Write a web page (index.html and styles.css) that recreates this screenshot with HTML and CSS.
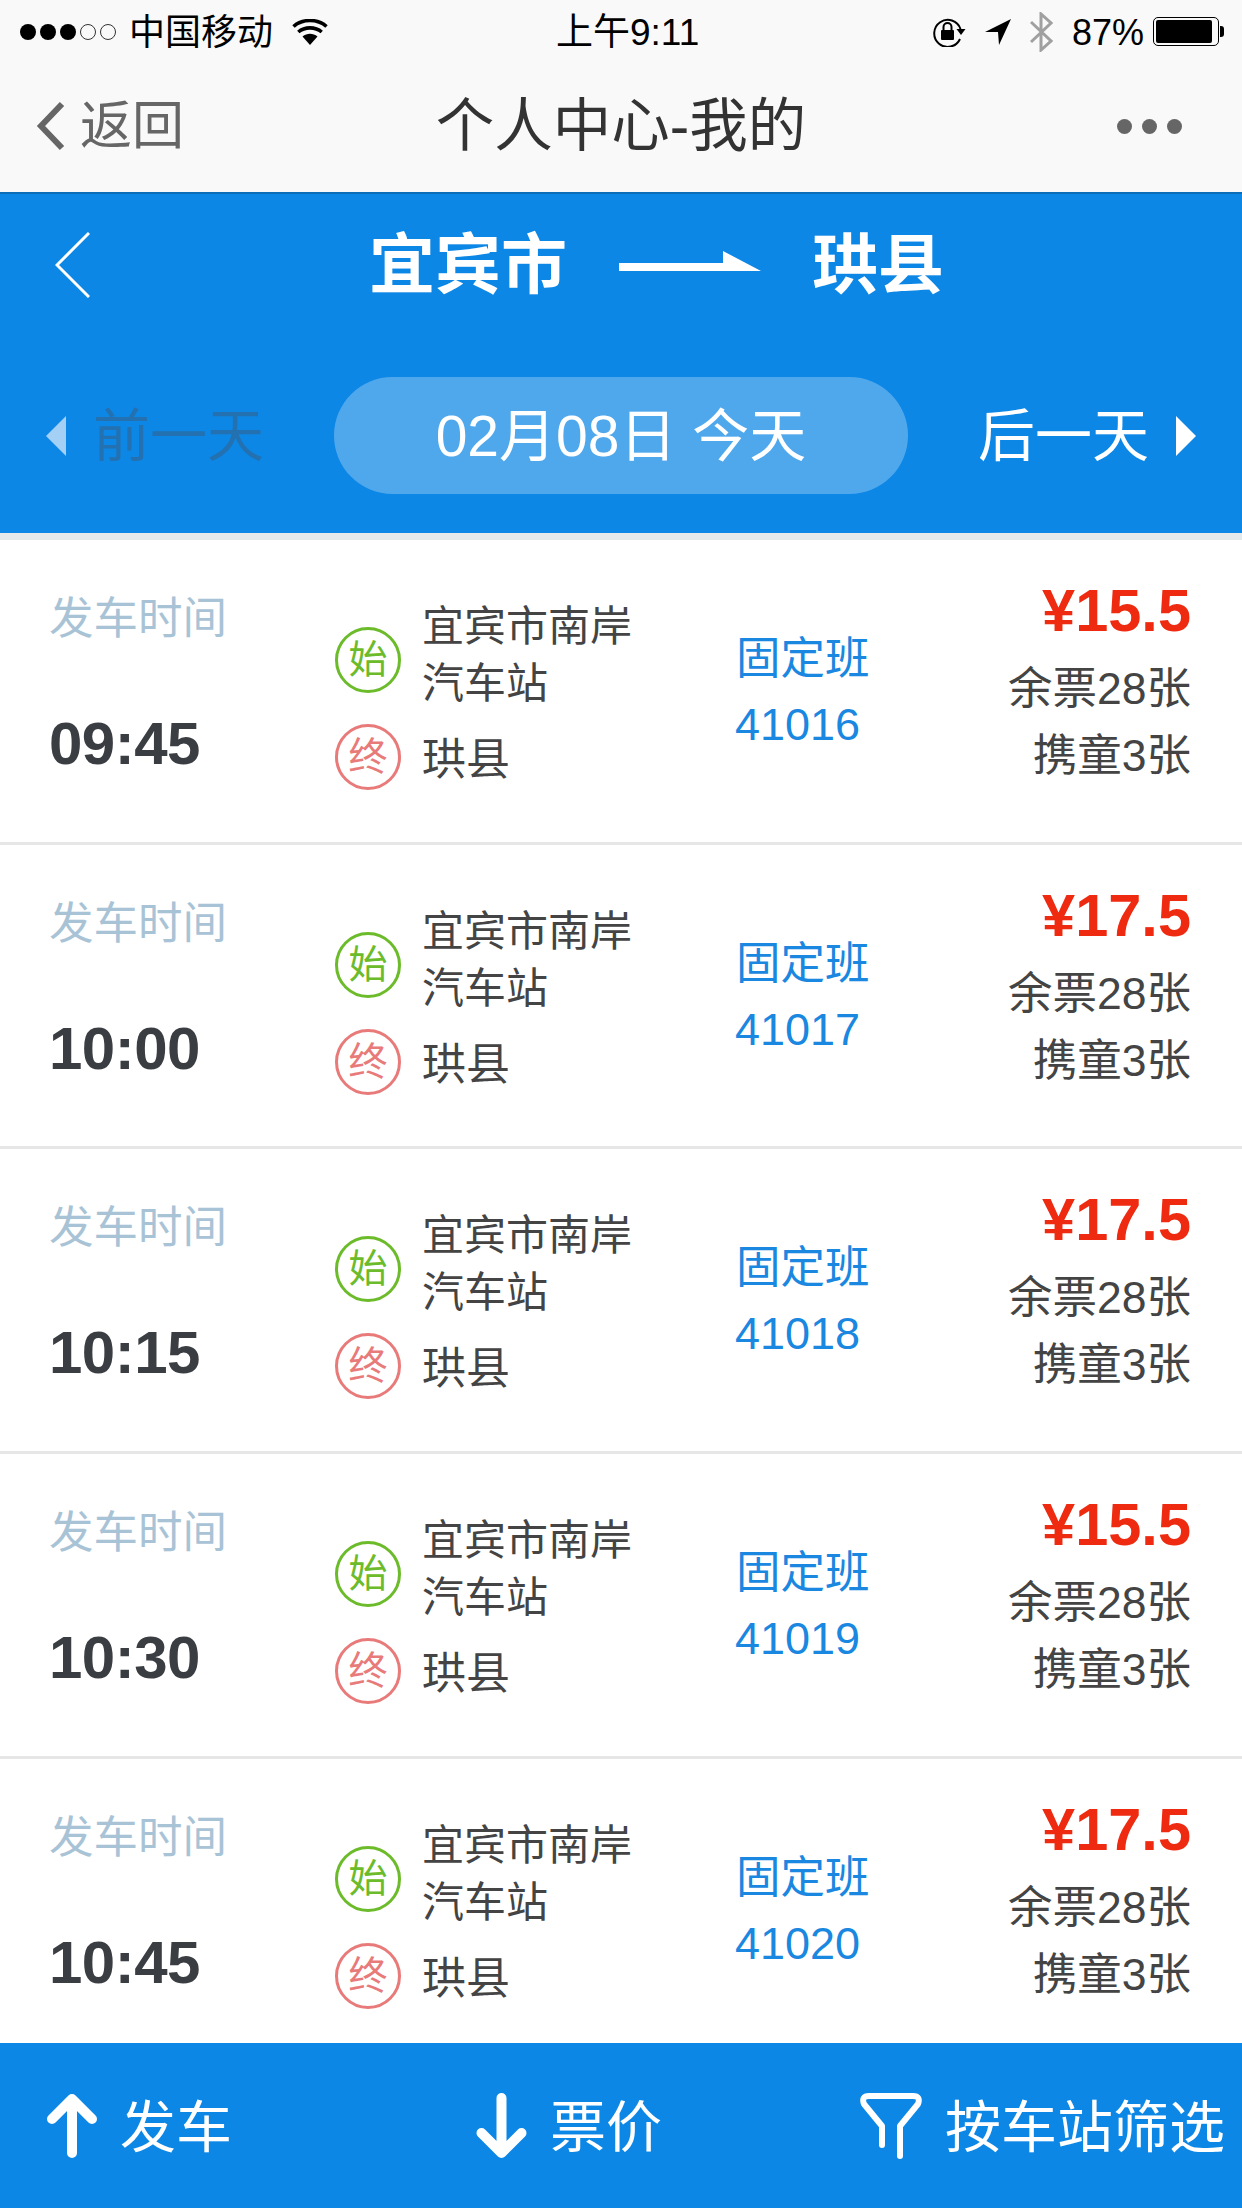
FILE: index.html
```html
<!DOCTYPE html>
<html lang="zh-CN">
<head>
    <meta charset="UTF-8">
    <meta name="viewport" content="width=device-width, initial-scale=1.0">
    <title>个人中心-我的</title>
    <link rel="stylesheet" href="styles.css">
</head>
<body>

<!-- Status bar -->
<div class="status-bar">
    <div class="status-left">
        <span class="signal"><i></i><i></i><i></i><i class="off"></i><i class="off"></i></span>
        <span class="carrier">中国移动</span>
        <svg class="wifi" width="36" height="26" viewBox="0 0 36 26">
            <path d="M18 26 L10.500 17.500 C15 13.800 21 13.800 25.500 17.500 Z" fill="#000"/>
            <path d="M6.300 13 C12.800 7.500 23.200 7.500 29.700 13" fill="none" stroke="#000" stroke-width="3.600"/>
            <path d="M1.500 7.500 C10.500 -0.500 25.500 -0.500 34.500 7.500" fill="none" stroke="#000" stroke-width="3.600"/>
        </svg>
    </div>
    <div class="status-time">上午9:11</div>
    <div class="status-right">
        <svg class="lock" width="34" height="30" viewBox="0 0 34 30">
            <path d="M28 22 A13.500 13.500 0 1 1 28.500 12" fill="none" stroke="#000" stroke-width="2"/>
            <path d="M24.500 12 L33.500 12 L29 18 Z" fill="#000"/>
            <rect x="9" y="13" width="13" height="10" rx="1" fill="#000"/>
            <path d="M11.500 13 V10 A4 4 0 0 1 19.500 10 V13" fill="none" stroke="#000" stroke-width="2"/>
        </svg>
        <svg class="location" width="26" height="26" viewBox="0 0 26 26">
            <path d="M26 0 L0 13 L13 13 L14 26 Z" fill="#000"/>
        </svg>
        <svg class="bluetooth" width="24" height="40" viewBox="0 0 24 40">
            <path d="M2 10 L22 29 L12 38 V2 L22 11 L2 30" fill="none" stroke="#a0a0a0" stroke-width="3"/>
        </svg>
        <span class="battery-text">87%</span>
        <span class="battery"><i></i></span>
    </div>
</div>

<!-- Nav bar -->
<div class="nav-bar">
    <div class="nav-back">
        <svg width="29" height="50" viewBox="0 0 29 50">
            <path d="M26 3 L5 25 L26 47" fill="none" stroke="#666" stroke-width="6"/>
        </svg>
        <span>返回</span>
    </div>
    <div class="nav-title">个人中心-我的</div>
    <div class="nav-more"><i></i><i></i><i></i></div>
</div>

<!-- Route header -->
<div class="route-header">
    <div class="route-line">
        <svg class="route-back" width="35" height="66" viewBox="0 0 35 66">
            <path d="M34 1 L2 33 L34 65" fill="none" stroke="#fff" stroke-width="3"/>
        </svg>
        <span class="route-from">宜宾市</span>
        <svg class="route-arrow" width="142" height="20" viewBox="0 0 142 20">
            <path d="M0 12 H104 V0 L142 20 H0 Z" fill="#fff"/>
        </svg>
        <span class="route-to">珙县</span>
    </div>
    <div class="date-line">
        <span class="tri-left"></span>
        <span class="day-prev">前一天</span>
        <div class="date-pill">02月08日 今天</div>
        <span class="day-next">后一天</span>
        <span class="tri-right"></span>
    </div>
</div>

<!-- Schedule list -->
<div class="list">
    <div class="row">
        <div class="col-time">
            <div class="time-label">发车时间</div>
            <div class="time-value">09:45</div>
        </div>
        <div class="col-stops">
            <div class="stop stop-start">
                <span class="badge badge-start">始</span>
                <span class="stop-name">宜宾市南岸<br>汽车站</span>
            </div>
            <div class="stop stop-end">
                <span class="badge badge-end">终</span>
                <span class="stop-name">珙县</span>
            </div>
        </div>
        <div class="col-type">固定班<br><span class="type-no">41016</span></div>
        <div class="col-price">
            <div class="price">¥15.5</div>
            <div class="tickets">余票28张<br>携童3张</div>
        </div>
    </div>
    <div class="row">
        <div class="col-time">
            <div class="time-label">发车时间</div>
            <div class="time-value">10:00</div>
        </div>
        <div class="col-stops">
            <div class="stop stop-start">
                <span class="badge badge-start">始</span>
                <span class="stop-name">宜宾市南岸<br>汽车站</span>
            </div>
            <div class="stop stop-end">
                <span class="badge badge-end">终</span>
                <span class="stop-name">珙县</span>
            </div>
        </div>
        <div class="col-type">固定班<br><span class="type-no">41017</span></div>
        <div class="col-price">
            <div class="price">¥17.5</div>
            <div class="tickets">余票28张<br>携童3张</div>
        </div>
    </div>
    <div class="row">
        <div class="col-time">
            <div class="time-label">发车时间</div>
            <div class="time-value">10:15</div>
        </div>
        <div class="col-stops">
            <div class="stop stop-start">
                <span class="badge badge-start">始</span>
                <span class="stop-name">宜宾市南岸<br>汽车站</span>
            </div>
            <div class="stop stop-end">
                <span class="badge badge-end">终</span>
                <span class="stop-name">珙县</span>
            </div>
        </div>
        <div class="col-type">固定班<br><span class="type-no">41018</span></div>
        <div class="col-price">
            <div class="price">¥17.5</div>
            <div class="tickets">余票28张<br>携童3张</div>
        </div>
    </div>
    <div class="row">
        <div class="col-time">
            <div class="time-label">发车时间</div>
            <div class="time-value">10:30</div>
        </div>
        <div class="col-stops">
            <div class="stop stop-start">
                <span class="badge badge-start">始</span>
                <span class="stop-name">宜宾市南岸<br>汽车站</span>
            </div>
            <div class="stop stop-end">
                <span class="badge badge-end">终</span>
                <span class="stop-name">珙县</span>
            </div>
        </div>
        <div class="col-type">固定班<br><span class="type-no">41019</span></div>
        <div class="col-price">
            <div class="price">¥15.5</div>
            <div class="tickets">余票28张<br>携童3张</div>
        </div>
    </div>
    <div class="row">
        <div class="col-time">
            <div class="time-label">发车时间</div>
            <div class="time-value">10:45</div>
        </div>
        <div class="col-stops">
            <div class="stop stop-start">
                <span class="badge badge-start">始</span>
                <span class="stop-name">宜宾市南岸<br>汽车站</span>
            </div>
            <div class="stop stop-end">
                <span class="badge badge-end">终</span>
                <span class="stop-name">珙县</span>
            </div>
        </div>
        <div class="col-type">固定班<br><span class="type-no">41020</span></div>
        <div class="col-price">
            <div class="price">¥17.5</div>
            <div class="tickets">余票28张<br>携童3张</div>
        </div>
    </div>
</div>

<!-- Bottom bar -->
<div class="bottom-bar">
    <div class="sort-item">
        <svg width="52" height="66" viewBox="0 0 52 66">
            <path d="M26 60 V7 M6 26 L26 6 L46 26" fill="none" stroke="#fff" stroke-width="10" stroke-linecap="round" stroke-linejoin="round"/>
        </svg>
        <span>发车</span>
    </div>
    <div class="sort-item">
        <svg width="53" height="66" viewBox="0 0 53 66">
            <path d="M26.500 5 V59 M6.500 40 L26.500 60 L46.500 40" fill="none" stroke="#fff" stroke-width="10" stroke-linecap="round" stroke-linejoin="round"/>
        </svg>
        <span>票价</span>
    </div>
    <div class="sort-item">
        <svg width="62" height="66" viewBox="0 0 62 66">
            <path d="M22 52 V33 L4 11 Q1 3 9 3 H53 Q61 3 58 11 L40 33 V63" fill="none" stroke="#fff" stroke-width="6" stroke-linecap="round" stroke-linejoin="round"/>
        </svg>
        <span class="sort-filter">按车站筛选</span>
    </div>
</div>

</body>
</html>
```

FILE: styles.css
```css
* {
    box-sizing: border-box;
    margin: 0;
    padding: 0;
}

body {
    width: 1242px;
    height: 2208px;
    display: flex;
    flex-direction: column;
    overflow: hidden;
    background: #fff;
    font-family: "Liberation Sans", "Noto Sans CJK SC", sans-serif;
}

i {
    display: block;
}

/* Status bar */
.status-bar {
    height: 60px;
    display: grid;
    grid-template-columns: 556px auto 1fr;
    align-items: center;
    background: #f9f9f9;
    color: #000;
}

.status-left {
    display: flex;
    align-items: center;
    padding-left: 20px;
}

.signal {
    display: flex;
    gap: 4px;
}

.signal i {
    width: 16px;
    height: 16px;
    border-radius: 50%;
    background: #000;
}

.signal i.off {
    background: none;
    border: 1px solid #333;
}

.carrier {
    margin-left: 13px;
    padding-top: 3px;
    font-size: 36px;
    line-height: 60px;
}

.wifi {
    margin-left: 19px;
}

.status-time {
    padding-top: 3px;
    font-size: 37px;
    line-height: 60px;
}

.status-right {
    display: flex;
    align-items: center;
    justify-content: flex-end;
    padding-right: 23px;
}

.location {
    margin-left: 19px;
}

.bluetooth {
    margin-left: 18px;
}

.battery-text {
    margin-left: 19px;
    padding-top: 2px;
    font-size: 36px;
    line-height: 60px;
}

.battery {
    position: relative;
    width: 66px;
    height: 29px;
    margin-left: 9px;
    border: 1px solid #000;
    border-radius: 5px;
    padding: 2px;
}

.battery i {
    width: 56px;
    height: 23px;
    background: #000;
    border-radius: 2px;
}

.battery::after {
    content: "";
    position: absolute;
    right: -6px;
    top: 8px;
    width: 4px;
    height: 11px;
    background: #000;
    border-radius: 0 3px 3px 0;
}

/* Nav bar */
.nav-bar {
    height: 132px;
    display: grid;
    grid-template-columns: 1fr auto 1fr;
    align-items: center;
    background: #f9f9f9;
}

.nav-back {
    display: flex;
    align-items: center;
    padding-left: 36px;
    color: #666;
    font-size: 52px;
    line-height: 60px;
}

.nav-back span {
    margin-left: 15px;
}

.nav-title {
    color: #333;
    font-size: 58.500px;
    line-height: 70px;
}

.nav-more {
    display: flex;
    justify-content: flex-end;
    gap: 10px;
    padding-right: 60px;
}

.nav-more i {
    width: 15px;
    height: 15px;
    border-radius: 50%;
    background: #666;
}

/* Route header */
.route-header {
    height: 348px;
    padding-top: 36px;
    background: #0d87e6;
    border-top: 2px solid #0b6cb8;
    border-bottom: 7px solid #e4e9ec;
    color: #fff;
}

.route-line {
    height: 70px;
    display: flex;
    align-items: center;
    padding-left: 55px;
    font-size: 66px;
    font-weight: bold;
    line-height: 70px;
}

.route-from {
    margin-left: 279px;
}

.route-arrow {
    margin-left: 52px;
    margin-bottom: 8px;
}

.route-to {
    margin-left: 51px;
}

.date-line {
    display: flex;
    align-items: center;
    margin-top: 77px;
    padding-left: 46px;
    font-size: 57px;
}

.tri-left {
    border-style: solid;
    border-width: 20px 20px 20px 0;
    border-color: transparent #a5d0f5 transparent transparent;
}

.tri-right {
    margin-left: 27px;
    border-style: solid;
    border-width: 20px 0 20px 20px;
    border-color: transparent transparent transparent #fff;
}

.day-prev {
    margin-left: 27px;
    margin-bottom: 10px;
    color: #2371b0;
}

.date-pill {
    width: 574px;
    height: 117px;
    margin-left: 70px;
    border-radius: 59px;
    background: #50a8ec;
    text-align: center;
    line-height: 118px;
}

.day-next {
    margin-left: 70px;
    margin-bottom: 9px;
}

/* Schedule list */
.list {
    flex: 1;
    overflow: hidden;
}

.row {
    height: 304.700px;
    display: grid;
    grid-template-columns: 285px 401px 1fr auto;
    padding: 0 51px 0 50px;
    border-bottom: 3px solid #e6e6e6;
}

.col-time {
    padding-top: 57px;
}

.time-label {
    color: #a9c3d6;
    font-size: 44.500px;
    line-height: 44px;
    margin-left: -1px;
}

.time-value {
    margin-top: 74px;
    color: #3a3d42;
    font-size: 60px;
    font-weight: bold;
    line-height: 58px;
    letter-spacing: -0.500px;
    margin-left: -1px;
}

.col-stops {
    padding-top: 57px;
    color: #444;
    font-size: 42px;
}

.stop {
    display: flex;
    column-gap: 21px;
}

.stop-start .badge {
    margin-top: 30px;
}

.stop-start .stop-name {
    padding-top: 1px;
    line-height: 57px;
}

.stop-end {
    margin-top: 12px;
}

.stop-end .stop-name {
    padding-top: 3px;
    font-size: 44px;
    line-height: 66px;
}

.badge {
    flex: none;
    width: 66px;
    height: 66px;
    border-radius: 50%;
    border: 3.500px solid;
    text-align: center;
    font-size: 39px;
    line-height: 59px;
}

.badge-start {
    color: #6cbb2a;
}

.badge-end {
    color: #e87a7a;
}

.col-type {
    padding-top: 86px;
    color: #1a87e0;
    font-size: 44.500px;
    line-height: 66px;
}

.type-no {
    font-size: 45px;
    margin-left: -1px;
}

.col-price {
    padding-top: 41px;
    text-align: right;
}

.price {
    color: #ee2a10;
    font-size: 59.500px;
    font-weight: bold;
    line-height: 60px;
}

.tickets {
    margin-top: 14px;
    color: #444;
    font-size: 44.500px;
    line-height: 67px;
}

/* Bottom bar */
.bottom-bar {
    height: 165px;
    flex: none;
    display: grid;
    grid-template-columns: 429px 385px 1fr;
    align-items: center;
    padding-left: 46px;
    background: #0d87e6;
    color: #fff;
    font-size: 56px;
    line-height: 66px;
}

.sort-item {
    display: flex;
    align-items: center;
    column-gap: 22px;
}

.sort-item span {
    padding-top: 5px;
}

.sort-filter {
    margin-left: 1px;
}
```
